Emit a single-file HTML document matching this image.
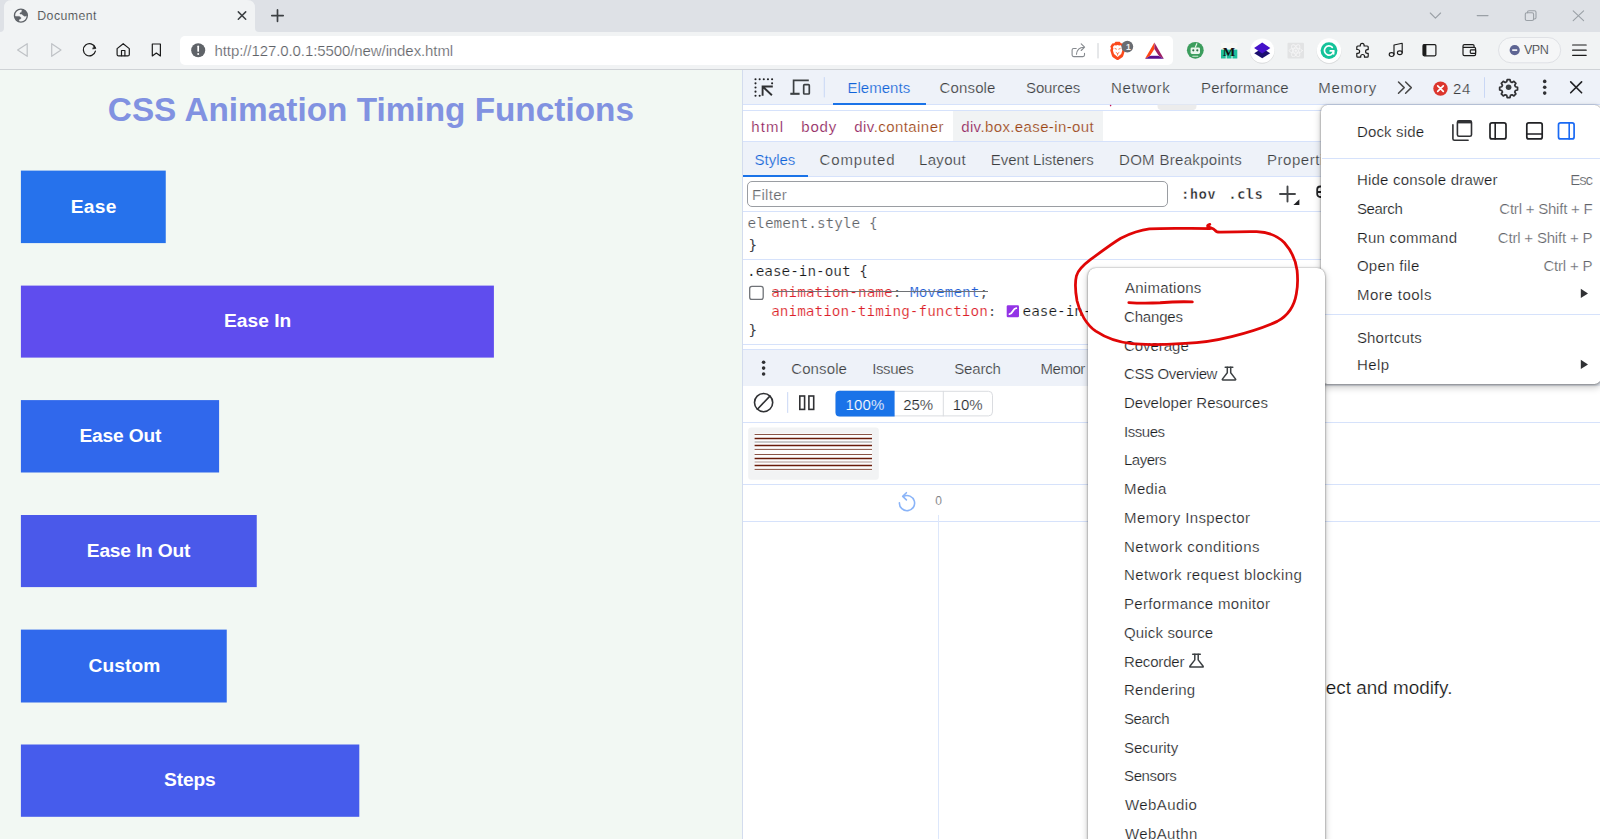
<!DOCTYPE html>
<html lang="en">
<head>
<meta charset="utf-8">
<title>Document</title>
<style>
html,body{margin:0;padding:0}
body{width:1600px;height:839px;position:relative;overflow:hidden;background:#fff;font-family:"Liberation Sans",sans-serif}
.a{position:absolute}
.t{position:absolute;white-space:pre;line-height:1;font-family:"Liberation Sans",sans-serif}
.m{font-family:"DejaVu Sans Mono","Liberation Mono",monospace}
.lm{font-family:"Liberation Mono",monospace}
.hl{position:absolute;height:1px;background:#d6e2fb;left:743px;right:0}
.bar{position:absolute;left:743px;right:0;background:#eef2f9}
.box{position:absolute;left:21px;height:72px;color:#fff;font-weight:700;font-size:20px;text-align:center;line-height:72px}
svg{position:absolute;overflow:visible}
</style>
</head>
<body>

<!-- ===== browser tab strip ===== -->
<div class="a" id="tabstrip" style="left:0;top:0;width:1600px;height:32px;background:#dee1e6"></div>
<svg style="left:0;top:0" width="270" height="32" viewBox="0 0 270 32"><path d="M0 32 Q4 32 4 28 L4 8 Q4 0 12 0 L247 0 Q255 0 255 8 L255 28 Q255 32 259 32 Z" fill="#f1f3f4"/></svg>
<!-- ===== browser toolbar ===== -->
<div class="a" id="toolbar" style="left:0;top:32px;width:1600px;height:37px;background:#f1f3f4"></div>
<div class="a" style="left:0;top:69px;width:1600px;height:1px;background:#cfd2d6"></div>
<div class="a" id="urlbar" style="left:180px;top:36px;width:993px;height:29px;background:#fff;border-radius:5px"></div>

<svg id="chromeicons" style="left:0;top:0" width="1600" height="70" viewBox="0 0 1600 70" fill="none" stroke-linecap="round" stroke-linejoin="round">
<!-- globe favicon -->
<g transform="translate(20.9 15.6)"><circle r="6.45" fill="#f3f4f5" stroke="#5f6368" stroke-width="1.35"/>
<path d="M1.4-6.1A6.3 6.3 0 0 1 6.2-1.4L5.9.1 3.8.6 2.2-.4.7-1.6H-.9V-2.6L.7-3.4z" fill="#5f6368" stroke="#5f6368" stroke-width=".5"/>
<path d="M-6.2.8H-1.7L-.1 1.8V3.1L-1.7 3.7-2.2 5.5-2.9 5.7A6.3 6.3 0 0 1-6.2.8z" fill="#5f6368" stroke="#5f6368" stroke-width=".5"/></g>
<!-- tab close, new tab -->
<path d="M238.3 11.9l7.4 7.4M245.7 11.9l-7.4 7.4" stroke="#3c4043" stroke-width="1.5"/>
<path d="M271.8 15.6h11.4M277.5 9.9v11.4" stroke="#3c4043" stroke-width="1.7"/>
<!-- window controls -->
<path d="M1430.3 13l5.1 5.2 5.2-5.2" stroke="#9aa0a6" stroke-width="1.1"/>
<path d="M1477.2 15.6h10.8" stroke="#9aa0a6" stroke-width="1.1"/>
<rect x="1525.3" y="12.7" width="8.3" height="7.8" rx="1.5" stroke="#9aa0a6" stroke-width="1.1"/>
<path d="M1527.5 12.7v-.5c0-.9.7-1.5 1.5-1.5h5.5c.9 0 1.5.7 1.5 1.5v5.3c0 .8-.6 1.5-1.5 1.5h-.9" stroke="#9aa0a6" stroke-width="1.1"/>
<path d="M1573.2 10.8l10.4 9.8M1583.6 10.8l-10.4 9.8" stroke="#9aa0a6" stroke-width="1.1"/>
<!-- back / forward -->
<path d="M27.2 43.7L17.6 50l9.6 6.3z" stroke="#bfc2c6" stroke-width="1.2"/>
<path d="M51.7 43.7l9.3 6.3-9.3 6.3z" stroke="#bfc2c6" stroke-width="1.2"/>
<!-- reload -->
<path d="M95.2 47.7a6.1 6.1 0 1 0 .2 3.4" stroke="#1b1b1b" stroke-width="1.2"/>
<path d="M94.3 45.6l1.7 2.9-3.2.5z" fill="#1b1b1b" stroke="#1b1b1b" stroke-width=".5"/>
<!-- home -->
<path d="M117.1 48.6l6.1-4.9 6.1 4.9v5.8c0 .9-.6 1.5-1.5 1.5h-9.2c-.9 0-1.5-.6-1.5-1.5z" stroke="#1b1b1b" stroke-width="1.2"/>
<path d="M121.5 55.7v-5.2h3.4v5.2" stroke="#1b1b1b" stroke-width="1.2"/>
<!-- bookmark -->
<path d="M152.3 44h8.1v11.9l-4.05-2.9-4.05 2.9z" stroke="#1b1b1b" stroke-width="1.2"/>
<!-- not-secure icon -->
<circle cx="198.2" cy="50.3" r="7" fill="#5f6368"/>
<path d="M198.2 46.3v4.6" stroke="#fff" stroke-width="1.7"/>
<circle cx="198.2" cy="53.9" r="1" fill="#fff"/>
<!-- share -->
<path d="M1076.2 48.5h-2.5c-.9 0-1.6.7-1.6 1.6v4.9c0 .9.7 1.6 1.6 1.6h9.2c.9 0 1.6-.7 1.6-1.6v-1.6" stroke="#85898e" stroke-width="1.1"/>
<path d="M1076.5 54.3c.3-4.3 2.7-6.9 7.6-7.1M1081.2 43.9l3.4 3.3-3.4 3.3" stroke="#85898e" stroke-width="1.1"/>
<path d="M1098 43.5v14.5" stroke="#cdd0d4" stroke-width="1"/>
<!-- brave lion -->
<path d="M1110.3 46.6l1.9-3 2.1-.300 1.2-1.5h4.2l1.2 1.5 2.1.300 1.9 3-.700 1.6.800 2.1-1.7 5.5c-.200.7-.600 1.3-1.3 1.7l-3.4 2.3c-.600.4-1.4.400-2 0l-3.4-2.3c-.700-.400-1.1-1-1.3-1.7l-1.7-5.5.800-2.1z" fill="#fb4a1c"/>
<path d="M1112.9 46.9l1.5-1.7 1.7.400 1.5-.500 1.5.500 1.7-.400 1.5 1.7-.500 1.6.500 2-1.1 3.6-3.6 2.9-3.6-2.9-1.1-3.6.500-2z" fill="#fff"/>
<path d="M1115 48.5l1.4.600M1120.2 48.5l-1.4.600M1116.2 52.6l1.4.900 1.4-.900M1117.6 53.5v1.6" stroke="#fb6a3c" stroke-width=".9" fill="none"/>
<circle cx="1127.3" cy="46.6" r="5.9" fill="#696c71"/>
<!-- BAT triangle -->
<path d="M1154.4 42.6L1145 58.7l4.9-2.8 4.5-6.8z" fill="#ff4713"/>
<path d="M1154.4 42.6l9.4 16.1-4.9-2.8-4.5-6.8z" fill="#9e1f63"/>
<path d="M1145 58.7h18.8l-4.9-2.8h-9z" fill="#5a0e8f"/>
<path d="M1149.9 55.9h9l-.600-1h-7.8z" fill="#d9c8ec"/>
<!-- green robot -->
<circle cx="1195.3" cy="50.3" r="8.4" fill="#3c9d5d"/>
<rect x="1190.6" y="47.4" width="9.4" height="6.6" rx="1.4" fill="#e9f5ec"/>
<circle cx="1193.3" cy="50.3" r="1.1" fill="#2e6e45"/><circle cx="1197.3" cy="50.3" r="1.1" fill="#2e6e45"/>
<path d="M1195.3 47.2l1.5-3.5" stroke="#e9f5ec" stroke-width="1.2"/>
<path d="M1192.8 56.3h5" stroke="#cfe8d6" stroke-width="1.1"/>
<!-- M icon -->
<rect x="1221" y="42.8" width="16.3" height="15.7" fill="#f7f7f5"/>
<rect x="1221" y="49.6" width="16.3" height="8.9" fill="#1dbf9b"/><path d="M1226.2 55.6v2.9M1232 55.6v2.9" stroke="#eafaf5" stroke-width="1"/>
<!-- layers -->
<circle cx="1262.2" cy="51.4" r="12.3" fill="#000" opacity=".10"/>
<circle cx="1262.2" cy="50.6" r="12.2" fill="#fff"/>
<path d="M1262.2 48.3l8 5-8 5-8-5z" fill="#1b0f6e"/>
<path d="M1262.2 42.4l8.1 5.6-8.1 5.6-8.1-5.6z" fill="#4512c9"/>
<!-- react (greyed) -->
<rect x="1287.5" y="42.8" width="16.5" height="15.7" rx="1" fill="#e2e3e4"/>
<g stroke="#f4f4f5" stroke-width=".9"><ellipse cx="1295.75" cy="50.65" rx="6.6" ry="2.5"/><ellipse cx="1295.75" cy="50.65" rx="6.6" ry="2.5" transform="rotate(60 1295.75 50.65)"/><ellipse cx="1295.75" cy="50.65" rx="6.6" ry="2.5" transform="rotate(120 1295.75 50.65)"/></g>
<circle cx="1295.75" cy="50.65" r="1.2" fill="#f4f4f5"/>
<!-- grammarly -->
<circle cx="1329" cy="51.4" r="12.4" fill="#000" opacity=".10"/>
<circle cx="1329" cy="50.6" r="12.3" fill="#fff"/>
<circle cx="1329" cy="50.6" r="8.4" fill="#15c39a"/>
<path d="M1332.3 47.3a4.6 4.6 0 1 0 1.3 3.6h-3.4" stroke="#fff" stroke-width="1.7"/>
<path d="M1333.7 50.7v3.4" stroke="#fff" stroke-width="1.5"/>
<!-- puzzle -->
<path d="M1360.3 45.2a1.9 1.9 0 0 1 3.8 0v.8h3.1c.6 0 1 .4 1 1v2.6h-.7a1.9 1.9 0 0 0 0 3.8h.7v2.8c0 .6-.4 1-1 1h-2.7v-.8a1.9 1.9 0 0 0-3.8 0v.8h-2.9c-.6 0-1-.4-1-1v-2.9h.9a1.9 1.9 0 0 0 0-3.8h-.9v-2.5c0-.6.4-1 1-1h2.5z" stroke="#1b1b1b" stroke-width="1.2"/>
<!-- music -->
<path d="M1394 54.3v-9.3l8.2-1.7v9.2" stroke="#1b1b1b" stroke-width="1.15"/>
<ellipse cx="1391.6" cy="54.6" rx="2.4" ry="1.9" stroke="#1b1b1b" stroke-width="1.15"/>
<ellipse cx="1399.8" cy="52.8" rx="2.4" ry="1.9" stroke="#1b1b1b" stroke-width="1.15"/>
<!-- sidebar -->
<rect x="1423" y="44.6" width="12.9" height="11.2" rx="1.2" stroke="#1b1b1b" stroke-width="1.2"/>
<rect x="1423" y="44.6" width="3.4" height="11.2" fill="#1b1b1b"/>
<!-- wallet -->
<path d="M1463 47.3v7c0 .8.6 1.4 1.4 1.4h9.8c.8 0 1.4-.6 1.4-1.4v-5.6c0-.8-.6-1.4-1.4-1.4zM1463 47.3v-1.2c0-.8.6-1.4 1.4-1.4h8.3c.8 0 1.4.6 1.4 1.4v1.2" stroke="#1b1b1b" stroke-width="1.2"/>
<rect x="1470.3" y="49.8" width="5.3" height="3.6" rx=".8" stroke="#1b1b1b" stroke-width="1.15"/>
<!-- VPN pill -->
<rect x="1498.5" y="37.5" width="62.2" height="25.3" rx="12.65" fill="#f5f6f7" stroke="#dfe1e5" stroke-width="1"/>
<circle cx="1514.7" cy="50.1" r="5.1" fill="#5e6593"/>
<path d="M1512.2 50.1h5" stroke="#fff" stroke-width="1.6" stroke-linecap="butt"/>
<!-- hamburger -->
<path d="M1572.6 45h13.6M1572.6 50.2h13.6M1572.6 55.3h13.6" stroke="#1b1b1b" stroke-width="1.2"/>
</svg>
<span class="t" style="left:1222.7px;top:44.7px;font-size:13.2px;font-weight:700;color:#111;font-family:'Liberation Serif',serif;letter-spacing:-.5px">M</span>


<!-- ===== page ===== -->
<div class="a" id="webpage" style="left:0;top:70px;width:742px;height:769px;background:#f2f8f3"></div>
<svg id="boxes" style="left:0;top:0" width="742" height="839" viewBox="0 0 742 839"><rect x="20.9" y="170.6" width="144.85" height="72.5" fill="#2672ec"/><rect x="20.9" y="285.6" width="473.00" height="72.0" fill="#5f4dee"/><rect x="20.9" y="400.1" width="198.20" height="72.4" fill="#3068ec"/><rect x="20.9" y="515" width="235.85" height="72.1" fill="#4a59ea"/><rect x="20.9" y="629.6" width="205.85" height="72.9" fill="#3069ec"/><rect x="20.9" y="744.5" width="338.40" height="72.3" fill="#465cec"/></svg>

<!-- ===== devtools ===== -->
<div class="a" id="devtools" style="left:742px;top:70px;width:858px;height:769px;background:#fff"></div>
<div class="a" style="left:742px;top:70px;width:1px;height:769px;background:#d3dcee"></div>
<div class="bar" style="top:70px;height:34px"></div>
<div class="hl" style="top:104px"></div>
<div class="a" style="left:833px;top:103px;width:93px;height:2px;background:#1a73e8"></div>
<div class="hl" style="top:110px"></div>
<div class="a" style="left:953px;top:111px;width:150px;height:30px;background:#f1f3f4"></div>
<div class="hl" style="top:141px"></div>
<div class="bar" style="top:142px;height:34px"></div>
<div class="hl" style="top:176px"></div>
<div class="a" style="left:743px;top:175px;width:65px;height:2px;background:#1a73e8"></div>
<div class="a" id="filter" style="left:747px;top:181px;width:419px;height:24px;border:1px solid #9a9da2;border-radius:5px;background:#fff"></div>
<div class="hl" style="top:211px"></div>
<div class="hl" style="top:259px"></div>
<div class="hl" style="top:344px"></div>
<div class="hl" style="top:349px"></div>
<div class="bar" style="top:350px;height:36px"></div>
<div class="hl" style="top:422px"></div>
<div class="hl" style="top:484px"></div>
<div class="hl" style="top:521px"></div>
<div class="a" style="left:938px;top:515px;width:1px;height:324px;background:#dde7fb"></div>

<svg id="devicons" style="left:0;top:0" width="1600" height="839" viewBox="0 0 1600 839" fill="none" stroke-linecap="round" stroke-linejoin="round">
<!-- inspect icon -->
<g fill="#202124"><circle cx="755.5" cy="79.2" r="1.05"/><circle cx="759.65" cy="79.2" r="1.05"/><circle cx="763.8" cy="79.2" r="1.05"/><circle cx="767.95" cy="79.2" r="1.05"/><circle cx="772.1" cy="79.2" r="1.05"/><circle cx="755.5" cy="83.35" r="1.05"/><circle cx="755.5" cy="87.5" r="1.05"/><circle cx="755.5" cy="91.65" r="1.05"/><circle cx="755.5" cy="95.8" r="1.05"/><circle cx="759.65" cy="95.8" r="1.05"/><circle cx="772.1" cy="83.35" r="1.05"/></g>
<path d="M772.8 86.5h-10.2v9.3M762.9 86.8l9 8.5" stroke="#303134" stroke-width="1.9" stroke-linecap="butt" stroke-linejoin="miter"/>
<!-- device icon -->
<path d="M808.8 80.4h-15.2v13" stroke="#3c4043" stroke-width="1.7" stroke-linecap="butt" stroke-linejoin="miter"/>
<path d="M790.3 93.8h9.3" stroke="#3c4043" stroke-width="2.1" stroke-linecap="butt"/>
<rect x="803.7" y="84.7" width="5.6" height="9.3" rx=".8" stroke="#3c4043" stroke-width="1.7"/>
<path d="M824.3 77.5v19.5" stroke="#c9d7f5" stroke-width="1"/>
<!-- more tabs chevrons -->
<path d="M1398.5 82l5.7 5.6-5.7 5.6M1405.6 82l5.7 5.6-5.7 5.6" stroke="#474747" stroke-width="1.5"/>
<!-- error badge -->
<circle cx="1440.5" cy="88.6" r="7.2" fill="#dc362e"/>
<path d="M1437.7 85.8l5.6 5.6M1443.3 85.8l-5.6 5.6" stroke="#fff" stroke-width="1.7"/>
<path d="M1484.5 77.6v19.8" stroke="#c9d7f5" stroke-width="1"/>
<!-- gear -->
<g transform="translate(1508.6 87.3) scale(.82)"><path d="M-1.7-9.3h3.4l.6 2.6 1.9.8 2.3-1.4 2.4 2.4-1.4 2.3.8 1.9 2.6.6v3.4l-2.6.6-.8 1.9 1.4 2.3-2.4 2.4-2.3-1.4-1.9.8-.6 2.6h-3.4l-.6-2.6-1.9-.8-2.3 1.4-2.4-2.4 1.4-2.3-.8-1.9-2.6-.6v-3.4l2.6-.6.8-1.9-1.4-2.3 2.4-2.4 2.3 1.4 1.9-.8z" stroke="#303134" stroke-width="2.1" stroke-linejoin="round"/><circle r="3.4" fill="#3c4043"/></g>
<!-- kebab -->
<circle cx="1544.7" cy="81.4" r="1.8" fill="#303134"/><circle cx="1544.7" cy="87.3" r="1.8" fill="#303134"/><circle cx="1544.7" cy="93.1" r="1.8" fill="#303134"/>
<!-- close -->
<path d="M1570.7 81.9l10.9 10.9M1581.6 81.9l-10.9 10.9" stroke="#202124" stroke-width="1.6"/>
<!-- elements panel scrollbar stub + tiny dot -->
<path d="M1157.5 104.5h39v1.5a4 4 0 0 1-4 4h-31a4 4 0 0 1-4-4z" fill="#ececec"/>
<circle cx="1110.6" cy="105.6" r=".8" fill="#c2185b"/>
<!-- new style rule + -->
<path d="M1280 194h15M1287.5 186.4v15.2" stroke="#45474a" stroke-width="1.9"/>
<path d="M1293.4 205h6v-5.8z" fill="#202124"/>
<path d="M1322 186.5h-1.8a3 3 0 0 0-3 3v4.5a3 3 0 0 0 3 3h1.8M1318 192h4" stroke="#202124" stroke-width="1.8"/>
<!-- checkbox -->
<rect x="749.7" y="286.4" width="13.5" height="13" rx="2.2" stroke="#6f7277" stroke-width="1.3" fill="#fff"/>
<!-- bezier swatch -->
<rect x="1006.7" y="305.2" width="12.3" height="12" rx="1.3" fill="#9334e6"/>
<path d="M1009.5 314.2c3.5-.200 3-5.8 6.8-6" stroke="#fff" stroke-width="1.8"/>
<!-- drawer kebab -->
<circle cx="763.6" cy="362.2" r="1.8" fill="#303134"/><circle cx="763.6" cy="368.1" r="1.8" fill="#303134"/><circle cx="763.6" cy="374" r="1.8" fill="#303134"/>
<!-- clear -->
<circle cx="763.6" cy="402.6" r="9.1" stroke="#303134" stroke-width="1.6"/>
<path d="M757.4 409.2l12.5-13.1" stroke="#303134" stroke-width="1.6"/>
<path d="M787.7 392.5v20" stroke="#c9d7f5" stroke-width="1"/>
<!-- pause -->
<rect x="799.8" y="396" width="4.8" height="13.4" stroke="#303134" stroke-width="1.6" stroke-linejoin="miter"/>
<rect x="808.9" y="396" width="4.8" height="13.4" stroke="#303134" stroke-width="1.6" stroke-linejoin="miter"/>
<!-- speed buttons -->
<rect x="836" y="391.3" width="156.5" height="24.6" rx="4" fill="#fff" stroke="#dadce0" stroke-width="1"/>
<path d="M943.3 391.3v24.6" stroke="#dadce0" stroke-width="1"/>
<path d="M839.5 390.8h55.1v25.6h-55.1a4 4 0 0 1-4-4v-17.6a4 4 0 0 1 4-4z" fill="#1a73e8"/>
<!-- animation preview -->
<rect x="748.2" y="427.5" width="130.6" height="52.2" rx="3" fill="#f2f3f4"/>
<rect x="754.6" y="433.3" width="117.4" height="37" fill="#fdfdfd"/>
<g stroke-linecap="butt">
<path d="M754.6 434.5h117.4M754.6 449.4h117.4M754.6 454.5h117.4M754.6 469.4h117.4" stroke="#8a5547" stroke-width="1"/>
<path d="M754.6 438.4h117.4M754.6 445.4h117.4M754.6 458.4h117.4M754.6 465.5h117.4" stroke="#6a1b0a" stroke-width="1.5"/>
<path d="M754.6 441.9h117.4" stroke="#b9b9b9" stroke-width="1.5"/>
<path d="M754.6 462h117.4" stroke="#c8b8b6" stroke-width="1.5"/>
</g>
<!-- replay -->
<path d="M903.6 496.3a7.6 7.6 0 1 1-4.2 6.5" stroke="#8ab4f8" stroke-width="1.6"/>
<path d="M906.4 492.7l-3.7 3.7 3.7 3.5" stroke="#8ab4f8" stroke-width="1.6"/>
</svg>



<span class="t" style="left:37.3px;top:9.6px;font-size:12.3px;color:#2e3134;letter-spacing:0.44px;-webkit-text-stroke:0.22px #f1f3f4;">Document</span>
<span class="t" style="left:214.5px;top:43.2px;font-size:15px;color:#5f6368;letter-spacing:-0.09px;-webkit-text-stroke:0.22px #ffffff;">http://127.0.0.1:5500/new/index.html</span>
<span class="t" style="left:1524.0px;top:43.7px;font-size:12.6px;color:#2a2d30;letter-spacing:-0.55px;-webkit-text-stroke:0.22px #f5f6f7;">VPN</span>
<span class="t" style="left:1125.9px;top:42.6px;font-size:8.6px;color:#f0f0f0;font-weight:700;">1</span>
<span class="t" style="left:107.8px;top:92.8px;font-size:33.33px;color:#8192e1;letter-spacing:0.01px;font-weight:700;">CSS Animation Timing Functions</span>
<span class="t" style="left:70.8px;top:196.7px;font-size:19.2px;color:#ffffff;letter-spacing:0.25px;font-weight:700;">Ease</span>
<span class="t" style="left:224.0px;top:310.7px;font-size:19.2px;color:#ffffff;font-weight:700;">Ease In</span>
<span class="t" style="left:79.5px;top:426.2px;font-size:19.2px;color:#ffffff;letter-spacing:-0.18px;font-weight:700;">Ease Out</span>
<span class="t" style="left:86.8px;top:540.5px;font-size:19.2px;color:#ffffff;letter-spacing:-0.20px;font-weight:700;">Ease In Out</span>
<span class="t" style="left:88.5px;top:655.5px;font-size:19.2px;color:#ffffff;letter-spacing:0.10px;font-weight:700;">Custom</span>
<span class="t" style="left:164.0px;top:770.0px;font-size:19.2px;color:#ffffff;letter-spacing:-0.12px;font-weight:700;">Steps</span>
<span class="t" style="left:847.4px;top:80.3px;font-size:15px;color:#0f62d8;letter-spacing:0.04px;-webkit-text-stroke:0.22px #eef2f9;">Elements</span>
<span class="t" style="left:939.6px;top:80.3px;font-size:15px;color:#3b3d40;letter-spacing:0.13px;-webkit-text-stroke:0.22px #eef2f9;">Console</span>
<span class="t" style="left:1026.0px;top:80.3px;font-size:15px;color:#3b3d40;letter-spacing:-0.12px;-webkit-text-stroke:0.22px #eef2f9;">Sources</span>
<span class="t" style="left:1111.0px;top:80.3px;font-size:15px;color:#3b3d40;letter-spacing:0.62px;-webkit-text-stroke:0.22px #eef2f9;">Network</span>
<span class="t" style="left:1201.1px;top:80.3px;font-size:15px;color:#3b3d40;letter-spacing:0.17px;-webkit-text-stroke:0.22px #eef2f9;">Performance</span>
<span class="t" style="left:1318.3px;top:80.3px;font-size:15px;color:#3b3d40;letter-spacing:0.74px;-webkit-text-stroke:0.22px #eef2f9;">Memory</span>
<span class="t" style="left:1453.0px;top:80.6px;font-size:15px;color:#3b3d40;letter-spacing:0.70px;-webkit-text-stroke:0.22px #eef2f9;">24</span>
<span class="t" style="left:751.2px;top:119.3px;font-size:15px;color:#8b1355;letter-spacing:1.20px;-webkit-text-stroke:0.22px #ffffff;">html</span>
<span class="t" style="left:801.3px;top:119.3px;font-size:15px;color:#8b1355;letter-spacing:0.77px;-webkit-text-stroke:0.22px #ffffff;">body</span>
<span class="t" style="left:754.6px;top:152.3px;font-size:15px;color:#0f62d8;letter-spacing:-0.04px;-webkit-text-stroke:0.22px #eef2f9;">Styles</span>
<span class="t" style="left:819.6px;top:152.3px;font-size:15px;color:#3b3d40;letter-spacing:0.83px;-webkit-text-stroke:0.22px #eef2f9;">Computed</span>
<span class="t" style="left:919.0px;top:152.3px;font-size:15px;color:#3b3d40;letter-spacing:0.32px;-webkit-text-stroke:0.22px #eef2f9;">Layout</span>
<span class="t" style="left:990.7px;top:152.3px;font-size:15px;color:#3b3d40;letter-spacing:-0.02px;-webkit-text-stroke:0.22px #eef2f9;">Event Listeners</span>
<span class="t" style="left:1119.0px;top:152.3px;font-size:15px;color:#3b3d40;letter-spacing:0.31px;-webkit-text-stroke:0.22px #eef2f9;">DOM Breakpoints</span>
<span class="t" style="left:1267.0px;top:152.3px;font-size:15px;color:#3b3d40;letter-spacing:0.53px;-webkit-text-stroke:0.22px #eef2f9;">Properties</span>
<span class="t" style="left:752.0px;top:187.3px;font-size:15px;color:#66696d;letter-spacing:0.30px;-webkit-text-stroke:0.22px #ffffff;">Filter</span>
<span class="t m" style="left:1180.9px;top:186.5px;font-size:14px;color:#202124;letter-spacing:0.33px;font-weight:700;-webkit-text-stroke:.4px #fff;">:hov</span>
<span class="t m" style="left:1228.2px;top:186.5px;font-size:14px;color:#202124;letter-spacing:0.33px;font-weight:700;-webkit-text-stroke:.4px #fff;">.cls</span>
<span class="t m" style="left:747.6px;top:216.2px;font-size:14.33px;color:#606368;letter-spacing:0.04px;-webkit-text-stroke:.18px #fff;">element.style {</span>
<span class="t m" style="left:748.5px;top:237.5px;font-size:14.33px;color:#3c4043;">}</span>
<span class="t m" style="left:747.1px;top:263.9px;font-size:14.33px;color:#17181a;-webkit-text-stroke:.18px #fff;">.ease-in-out {</span>
<span class="t m" style="left:748.5px;top:323.0px;font-size:14.33px;color:#3c4043;">}</span>
<span class="t" style="left:791.2px;top:361.1px;font-size:15px;color:#3b3d40;letter-spacing:0.12px;-webkit-text-stroke:0.22px #eef2f9;">Console</span>
<span class="t" style="left:872.2px;top:361.1px;font-size:15px;color:#3b3d40;letter-spacing:-0.38px;-webkit-text-stroke:0.22px #eef2f9;">Issues</span>
<span class="t" style="left:954.3px;top:361.1px;font-size:15px;color:#3b3d40;letter-spacing:-0.20px;-webkit-text-stroke:0.22px #eef2f9;">Search</span>
<span class="t" style="left:1040.5px;top:361.1px;font-size:15px;color:#3b3d40;letter-spacing:-0.48px;-webkit-text-stroke:0.22px #eef2f9;">Memor</span>
<span class="t" style="left:845.4px;top:397.0px;font-size:15px;color:#ffffff;letter-spacing:0.20px;-webkit-text-stroke:0.22px #1a73e8;">100%</span>
<span class="t" style="left:903.3px;top:397.0px;font-size:15px;color:#26282b;letter-spacing:-0.15px;-webkit-text-stroke:0.22px #ffffff;">25%</span>
<span class="t" style="left:952.8px;top:397.0px;font-size:15px;color:#26282b;letter-spacing:-0.10px;-webkit-text-stroke:0.22px #ffffff;">10%</span>
<span class="t" style="left:935.3px;top:495.4px;font-size:12px;color:#5f6368;-webkit-text-stroke:0.22px #ffffff;">0</span>
<span class="t" style="left:1325.7px;top:678.8px;font-size:18.9px;color:#141414;-webkit-text-stroke:0.22px #ffffff;">ect and modify.</span>
<span class="t" style="left:854.3px;top:119.3px;font-size:15px;color:#8b1355;letter-spacing:0.43px;-webkit-text-stroke:0.22px #ffffff;">div<span style="color:#9a4210">.container</span></span>
<span class="t" style="left:961.2px;top:119.3px;font-size:15px;color:#8b1355;letter-spacing:0.38px;-webkit-text-stroke:0.22px #f1f3f4;">div<span style="color:#9a4210">.box.ease-in-out</span></span>
<span class="t m" style="left:771.2px;top:284.8px;font-size:14.33px;color:#3c4043;letter-spacing:0.05px;-webkit-text-stroke:.18px #fff;"><span style="color:#dc1f2b">animation-name</span>: <span style="color:#1f5fd6">Movement</span>;</span>
<span class="t m" style="left:771.2px;top:303.5px;font-size:14.33px;color:#3c4043;letter-spacing:0.04px;-webkit-text-stroke:.18px #fff;"><span style="color:#dc1f2b">animation-timing-function</span>:</span>
<span class="t m" style="left:1022.5px;top:303.5px;font-size:14.33px;color:#17181a;-webkit-text-stroke:.18px #fff;">ease-in-out</span>
<div class="a" style="left:772px;top:291px;width:215.5px;height:1px;background:#6e7175"></div>

<!-- main menu -->
<div class="a" id="mainmenu" style="left:1321px;top:105px;width:280px;height:279px;background:#fff;border-radius:6.5px;box-shadow:0 0 1.5px rgba(0,0,0,.42),0 1px 3px rgba(0,0,0,.28),0 3px 7px 1px rgba(0,0,0,.18)"></div>
<div class="a" style="left:1322px;top:158px;width:278px;height:1px;background:#d6e2fb"></div>
<div class="a" style="left:1322px;top:314px;width:278px;height:1px;background:#d6e2fb"></div>
<!-- submenu -->
<div class="a" id="submenu" style="left:1088px;top:267.5px;width:237px;height:600px;background:#fff;border-radius:8px;box-shadow:0 0 1.5px rgba(0,0,0,.42),0 1px 3px rgba(0,0,0,.28),0 3px 7px 1px rgba(0,0,0,.18)"></div>
<svg id="menuicons" style="left:0;top:0" width="1600" height="839" viewBox="0 0 1600 839" fill="none" stroke-linecap="round" stroke-linejoin="round">
<!-- dock side icons -->
<rect x="1457.4" y="120.9" width="14.1" height="15.4" rx="1.6" stroke="#303134" stroke-width="1.6"/>
<path d="M1457.4 122.1h14.1" stroke="#303134" stroke-width="2.6" stroke-linecap="butt"/>
<path d="M1452.9 124.8v13.9a1.6 1.6 0 0 0 1.6 1.6h13.6" stroke="#303134" stroke-width="1.6"/>
<rect x="1490" y="122.9" width="16" height="16" rx="2" stroke="#202124" stroke-width="1.7"/>
<path d="M1495.2 122.9v16" stroke="#202124" stroke-width="1.6"/>
<rect x="1526.8" y="122.9" width="15.4" height="16" rx="2" stroke="#202124" stroke-width="1.7"/>
<path d="M1526.8 134h15.4" stroke="#202124" stroke-width="1.6"/>
<rect x="1558.5" y="122.9" width="15.6" height="16" rx="2" stroke="#1a6af4" stroke-width="1.7"/>
<path d="M1569.2 122.9v16" stroke="#1a6af4" stroke-width="1.6"/>
<!-- submenu arrows -->
<path d="M1580.8 288.7l7.2 4.7-7.2 4.7z" fill="#303134"/>
<path d="M1580.8 359.7l7.2 4.7-7.2 4.7z" fill="#303134"/>
<!-- experiment flasks -->
<g id="flask" stroke="#3c4043" stroke-width="1.5"><path d="M1225.2 367.2h7.6"/><path d="M1227.3 367.2v5.6l-4.9 6.3c-.3.4 0 .9.4.9h12.4c.4 0 .7-.5.4-.9l-4.9-6.3v-5.6"/></g>
<g stroke="#3c4043" stroke-width="1.5" transform="translate(-32.5 287.1)"><path d="M1225.2 367.2h7.6"/><path d="M1227.3 367.2v5.6l-4.9 6.3c-.3.4 0 .9.4.9h12.4c.4 0 .7-.5.4-.9l-4.9-6.3v-5.6"/></g>
</svg>


<span class="t" style="left:1356.9px;top:124.3px;font-size:15px;color:#17181a;letter-spacing:0.16px;-webkit-text-stroke:0.22px #ffffff;">Dock side</span>
<span class="t" style="left:1356.9px;top:172.3px;font-size:15px;color:#17181a;letter-spacing:0.22px;-webkit-text-stroke:0.22px #ffffff;">Hide console drawer</span>
<span class="t" style="left:1570.3px;top:172.3px;font-size:15px;color:#5f6368;letter-spacing:-1.15px;-webkit-text-stroke:0.22px #ffffff;">Esc</span>
<span class="t" style="left:1356.9px;top:201.2px;font-size:15px;color:#17181a;letter-spacing:-0.34px;-webkit-text-stroke:0.22px #ffffff;">Search</span>
<span class="t" style="left:1499.3px;top:201.2px;font-size:15px;color:#5f6368;letter-spacing:-0.22px;-webkit-text-stroke:0.22px #ffffff;">Ctrl + Shift + F</span>
<span class="t" style="left:1356.9px;top:230.0px;font-size:15px;color:#17181a;letter-spacing:0.26px;-webkit-text-stroke:0.22px #ffffff;">Run command</span>
<span class="t" style="left:1497.8px;top:230.0px;font-size:15px;color:#5f6368;letter-spacing:-0.19px;-webkit-text-stroke:0.22px #ffffff;">Ctrl + Shift + P</span>
<span class="t" style="left:1356.9px;top:258.3px;font-size:15px;color:#17181a;letter-spacing:0.30px;-webkit-text-stroke:0.22px #ffffff;">Open file</span>
<span class="t" style="left:1543.5px;top:258.3px;font-size:15px;color:#5f6368;letter-spacing:-0.21px;-webkit-text-stroke:0.22px #ffffff;">Ctrl + P</span>
<span class="t" style="left:1356.9px;top:287.3px;font-size:15px;color:#17181a;letter-spacing:0.50px;-webkit-text-stroke:0.22px #ffffff;">More tools</span>
<span class="t" style="left:1356.9px;top:329.6px;font-size:15px;color:#17181a;letter-spacing:0.19px;-webkit-text-stroke:0.22px #ffffff;">Shortcuts</span>
<span class="t" style="left:1356.9px;top:357.3px;font-size:15px;color:#17181a;letter-spacing:0.47px;-webkit-text-stroke:0.22px #ffffff;">Help</span>
<span class="t" style="left:1125.0px;top:280.1px;font-size:15px;color:#1c1d1f;letter-spacing:0.24px;-webkit-text-stroke:0.22px #ffffff;">Animations</span>
<span class="t" style="left:1124.0px;top:308.8px;font-size:15px;color:#1c1d1f;letter-spacing:-0.17px;-webkit-text-stroke:0.22px #ffffff;">Changes</span>
<span class="t" style="left:1124.0px;top:337.5px;font-size:15px;color:#1c1d1f;letter-spacing:-0.04px;-webkit-text-stroke:0.22px #ffffff;">Coverage</span>
<span class="t" style="left:1124.0px;top:366.3px;font-size:15px;color:#1c1d1f;letter-spacing:-0.37px;-webkit-text-stroke:0.22px #ffffff;">CSS Overview</span>
<span class="t" style="left:1124.0px;top:395.0px;font-size:15px;color:#1c1d1f;letter-spacing:-0.02px;-webkit-text-stroke:0.22px #ffffff;">Developer Resources</span>
<span class="t" style="left:1124.0px;top:423.7px;font-size:15px;color:#1c1d1f;letter-spacing:-0.46px;-webkit-text-stroke:0.22px #ffffff;">Issues</span>
<span class="t" style="left:1124.0px;top:452.4px;font-size:15px;color:#1c1d1f;letter-spacing:-0.50px;-webkit-text-stroke:0.22px #ffffff;">Layers</span>
<span class="t" style="left:1124.0px;top:481.1px;font-size:15px;color:#1c1d1f;letter-spacing:0.38px;-webkit-text-stroke:0.22px #ffffff;">Media</span>
<span class="t" style="left:1124.0px;top:509.9px;font-size:15px;color:#1c1d1f;letter-spacing:0.40px;-webkit-text-stroke:0.22px #ffffff;">Memory Inspector</span>
<span class="t" style="left:1124.0px;top:538.6px;font-size:15px;color:#1c1d1f;letter-spacing:0.52px;-webkit-text-stroke:0.22px #ffffff;">Network conditions</span>
<span class="t" style="left:1124.0px;top:567.3px;font-size:15px;color:#1c1d1f;letter-spacing:0.41px;-webkit-text-stroke:0.22px #ffffff;">Network request blocking</span>
<span class="t" style="left:1124.0px;top:596.0px;font-size:15px;color:#1c1d1f;letter-spacing:0.33px;-webkit-text-stroke:0.22px #ffffff;">Performance monitor</span>
<span class="t" style="left:1124.0px;top:624.7px;font-size:15px;color:#1c1d1f;letter-spacing:0.15px;-webkit-text-stroke:0.22px #ffffff;">Quick source</span>
<span class="t" style="left:1124.0px;top:653.5px;font-size:15px;color:#1c1d1f;letter-spacing:-0.17px;-webkit-text-stroke:0.22px #ffffff;">Recorder</span>
<span class="t" style="left:1124.0px;top:682.2px;font-size:15px;color:#1c1d1f;letter-spacing:0.25px;-webkit-text-stroke:0.22px #ffffff;">Rendering</span>
<span class="t" style="left:1124.0px;top:710.9px;font-size:15px;color:#1c1d1f;letter-spacing:-0.40px;-webkit-text-stroke:0.22px #ffffff;">Search</span>
<span class="t" style="left:1124.0px;top:739.6px;font-size:15px;color:#1c1d1f;-webkit-text-stroke:0.22px #ffffff;">Security</span>
<span class="t" style="left:1124.0px;top:768.3px;font-size:15px;color:#1c1d1f;letter-spacing:-0.37px;-webkit-text-stroke:0.22px #ffffff;">Sensors</span>
<span class="t" style="left:1125.0px;top:797.1px;font-size:15px;color:#1c1d1f;letter-spacing:0.40px;-webkit-text-stroke:0.22px #ffffff;">WebAudio</span>
<span class="t" style="left:1125.0px;top:825.8px;font-size:15px;color:#1c1d1f;letter-spacing:0.37px;-webkit-text-stroke:0.22px #ffffff;">WebAuthn</span>

<svg id="annot" style="left:1060px;top:215px" width="280" height="150" viewBox="0 0 1566 839" fill="none" stroke="#e00606" stroke-linecap="round" stroke-linejoin="round">
<path d="M838 52 C826 54 822 62 830 68 C846 74 858 74 866 84 C872 94 884 97 900 96 C960 94 1040 92 1100 93 C1160 95 1215 115 1255 155 C1295 200 1318 250 1326 310 C1330 350 1330 400 1322 440 C1312 500 1280 560 1215 595 C1150 625 1060 655 960 680 C880 700 780 715 700 718 C600 724 480 728 400 720 C330 712 260 690 200 650 C150 615 110 550 95 480 C86 430 82 380 92 340 C102 305 130 280 170 250 C230 205 290 160 340 130 C390 105 440 85 500 78 C580 72 720 76 840 76" stroke-width="15.5"/>
<path d="M385 490 C440 494 500 494 560 491 C620 486 690 484 740 486" stroke-width="16"/>
</svg>


</body>
</html>
